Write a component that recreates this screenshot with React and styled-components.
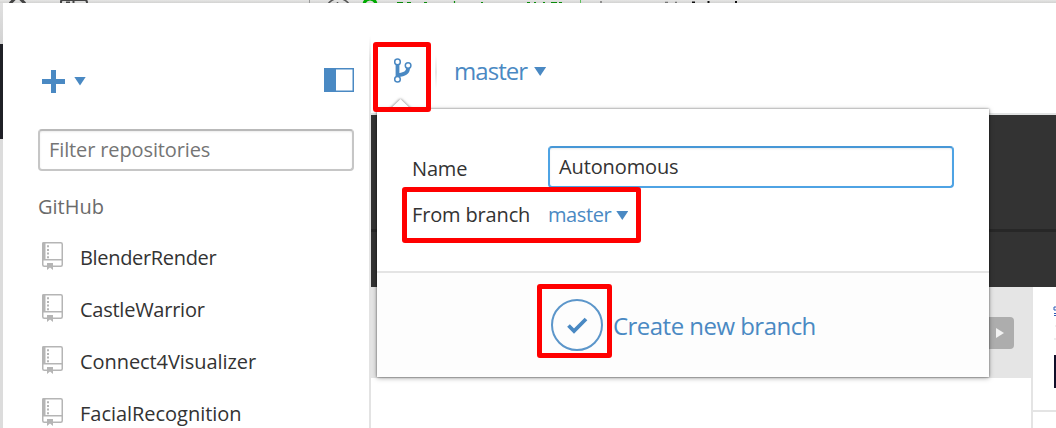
import React from "react";
import styled, { createGlobalStyle } from "styled-components";

const BLUE = "#4a89c3";

const GlobalStyle = createGlobalStyle`
  * { box-sizing: border-box; }
  body { margin: 0; background: #fff; overflow: hidden; }
`;

const Screen = styled.div`
  position: relative;
  width: 1056px;
  height: 428px;
  overflow: hidden;
  display: flex;
  flex-direction: column;
  font-family: "Open Sans", "Noto Sans", sans-serif;
  font-size: 20px;
  color: #333;
`;

const BrowserStrip = styled.div`
  height: 3px;
  flex: none;
  background: linear-gradient(#e6e6e5, #d2d2d1);
  svg { display: block; }
`;

const Desktop = styled.div`
  flex: 1;
  min-height: 0;
  display: flex;
`;

const DesktopEdge = styled.div`
  width: 3px;
  flex: none;
  background: linear-gradient(#e0e0e0, #d2d2d2 41px, #1f2026 41px, #1f2026 136px, #dcdcdc 136px);
`;

const Sidebar = styled.aside`
  width: 366px;
  flex: none;
  padding: 65px 15px 0 35px;
  display: flex;
  flex-direction: column;
`;

const SidebarTools = styled.div`
  height: 24px;
  flex: none;
  padding-left: 4px;
  display: flex;
  align-items: center;
  justify-content: space-between;
`;

const AddButton = styled.div`
  display: flex;
  align-items: center;
  gap: 9px;
  padding-top: 2px;
`;

const Caret = styled.span`
  width: 12px;
  height: 9px;
  flex: none;
  margin-top: ${(p) => p.$drop || 0}px;
  background: ${BLUE};
  clip-path: polygon(0 0, 100% 0, 50% 100%);
`;

const Field = styled.div`
  height: 42px;
  flex: none;
  border: 2px solid ${(p) => (p.$active ? "#4ea3e4" : "#c6c6c6")};
  border-top-color: ${(p) => (p.$active ? "#4797d6" : "#b9b9b9")};
  border-radius: 4px;
  padding-left: 9px;
  line-height: 38px;
  background: #fff;
  box-shadow: inset 0 1px 2px rgba(0, 0, 0, 0.08);
`;

const FilterField = styled(Field)`
  margin-top: 37px;
  color: #757575;
  letter-spacing: -0.12px;
`;

const GroupTitle = styled.h2`
  margin: 22px 0 10px;
  font-size: 20px;
  font-weight: 400;
  line-height: 28px;
  color: #6b6b6b;
`;

const RepoRow = styled.div`
  height: 52px;
  flex: none;
  display: flex;
  align-items: center;
  padding-left: 4px;
  gap: 17px;
  letter-spacing: ${(p) => p.$tracking}px;
  svg { margin-bottom: 2px; }
`;

const Main = styled.main`
  flex: 1;
  display: flex;
  flex-direction: column;
  border-left: 2px solid;
  border-image: linear-gradient(transparent 34px, #e3e3e3 58px) 1;
`;

const BranchBar = styled.header`
  height: 112px;
  flex: none;
  border-bottom: 2px solid #e2e4e4;
  padding: 52px 0 0 23px;
  display: flex;
  align-items: flex-start;
`;

const BranchIconSlot = styled.div`
  width: 20px;
  height: 28px;
  padding-top: 2px;
`;

const BarDivider = styled.div`
  width: 2px;
  height: 34px;
  margin: 0 17px 0 21px;
  background: linear-gradient(#fff, #e6e6e6 50%, #fff);
`;

const BranchName = styled.div`
  display: flex;
  align-items: center;
  gap: 7px;
  height: 31px;
  line-height: 31px;
  font-size: 24px;
  letter-spacing: -0.95px;
  color: ${BLUE};
`;

const CommitGraph = styled.section`
  height: 172px;
  flex: none;
  background: #333;
  padding-top: 114px;
`;

const GraphLine = styled.div`
  height: 3px;
  background: #272727;
`;

const Lower = styled.div`
  flex: 1;
  display: flex;
`;

const CompareColumn = styled.div`
  width: 662px;
  flex: none;
  border-right: 2px solid #e4e4e4;
`;

const CompareStrip = styled.div`
  height: 91px;
  background: #e5e5e5;
  display: flex;
  justify-content: flex-end;
  padding: 30px 17px 0 0;
`;

const PlayButton = styled.div`
  width: 40px;
  height: 32px;
  border-radius: 4px;
  background: #adadad;
  display: flex;
  align-items: center;
  justify-content: flex-end;
  padding-right: 10px;
`;

const CommitColumn = styled.div`
  flex: 1;
`;

const CommitItem = styled.div`
  height: 125px;
  border-bottom: 2px solid #e4e4e4;
  display: flex;
  justify-content: flex-end;
  padding-top: 19px;
  svg { display: block; }
`;

const Popover = styled.div`
  position: absolute;
  left: 377px;
  top: 109px;
  width: 612px;
  height: 268px;
  background: #fff;
  box-shadow: 0 0 2px rgba(0, 0, 0, 0.45), 0 1px 5px rgba(0, 0, 0, 0.35);
  display: flex;
  flex-direction: column;
`;

const PopoverTip = styled.svg`
  position: absolute;
  left: 388px;
  top: 96px;
  path { filter: drop-shadow(0 0 1.5px rgba(0, 0, 0, 0.6)); }
`;

const Form = styled.div`
  height: 162px;
  flex: none;
  padding: 37px 35px 0;
  display: grid;
  grid-template-columns: 136px 1fr;
  grid-template-rows: 42px 50px;
`;

const Label = styled.label`
  line-height: ${(p) => p.$line}px;
  letter-spacing: -0.15px;
`;

const NameField = styled(Field)`
  letter-spacing: -0.12px;
`;

const BaseBranch = styled.div`
  display: flex;
  align-items: center;
  gap: 5px;
  height: 53px;
  color: ${BLUE};
  letter-spacing: -0.4px;
`;

const PopoverFooter = styled.div`
  flex: 1;
  border-top: 2px solid #e4e4e4;
  background: #fdfdfd;
  display: flex;
  align-items: center;
  padding: 0 0 0 174px;
  gap: 10px;
  font-size: 24px;
  letter-spacing: -0.53px;
  color: ${BLUE};
`;

const Confirm = styled.span`
  width: 52px;
  height: 52px;
  border: 2px solid #5c96ca;
  border-radius: 50%;
  display: flex;
  align-items: center;
  justify-content: center;
`;

const Highlight = styled.div`
  position: absolute;
  left: ${(p) => p.$x}px;
  top: ${(p) => p.$y}px;
  width: ${(p) => p.$w}px;
  height: ${(p) => p.$h}px;
  border: 5px solid #f00;
  border-radius: 3px;
`;

const StripFragments = () => (
  <svg width="1056" height="3" fill="none">
    <path d="M10 3.5 17.500 -4 25 3.500" stroke="#444" strokeWidth="3" />
    <path d="M61 3V1.500Q61 0 63 0H85Q87 0 87 3M73.500 0V3M66 2.500h4" stroke="#444" strokeWidth="2" />
    <path d="M309.500 0V3" stroke="#999" />
    <path d="M328 4Q331 0 335 -1M342 -1Q346 0 349 4M337.500 2v1" stroke="#555" strokeWidth="1.500" />
    <path d="M364 4Q365 -1 370 -1T376 4" stroke="#0a0" strokeWidth="3" />
    <path d="M397 2.500h6M407 2.500h4M424 2.500h3M454.500 1v2M481 2.500h2M527 2.500h3M534 2.500h2M543 2.500h2M551 2.500h6M559 2.500h3" stroke="#0a8a0a" strokeWidth="1.200" />
    <path d="M580.500 0V3" stroke="#5cc05c" />
    <path d="M601 1v2M665 2.500h3M675 2.500h2" stroke="#777" strokeWidth="1.500" />
    <path d="M692 2.500h3M707.500 2h2M735 2h2" stroke="#111" strokeWidth="1.800" />
  </svg>
);

const PlusIcon = () => (
  <svg width="23" height="23" viewBox="0 0 23 23" fill={BLUE}>
    <path d="M9 0h5v9h9v5h-9v9H9v-9H0V9h9z" />
  </svg>
);

const PanelIcon = () => (
  <svg width="30" height="24" viewBox="0 0 30 24">
    <path d="M.75.75h28.500v22.500H.75z" fill="#fff" stroke={BLUE} strokeWidth="1.500" />
    <path d="M0 0h12v24H0z" fill={BLUE} />
  </svg>
);

const RepoIcon = () => (
  <svg width="21" height="28" viewBox="0 0 21 28" fill="none">
    <path d="M1.500 0H3.500V18H0V1.500Q0 0 1.500 0z" fill="#b5b5b5" />
    <rect x=".75" y=".75" width="19.500" height="23.500" rx="1.500" stroke="#b5b5b5" strokeWidth="1.500" />
    <path d="M1 17.750h19" stroke="#b5b5b5" strokeWidth="1.500" />
    <path d="M6 3.200v13" stroke="#b5b5b5" strokeWidth="2" strokeDasharray="2 1.700" />
    <path d="M5 21h6v7l-3-2.500L5 28z" fill="#b5b5b5" />
  </svg>
);

const BranchIcon = () => (
  <svg width="20" height="26" viewBox="0 0 20 26" fill="none">
    <path d="M3.500 7V20M14.100 11C14.100 16 10.500 17.300 3.500 18.500" stroke={BLUE} strokeWidth="3.800" />
    <g fill="#fff" stroke={BLUE} strokeWidth="1.500">
      <circle cx="3.500" cy="4.900" r="2.800" />
      <circle cx="14.100" cy="8.500" r="2.800" />
      <circle cx="3.500" cy="22.300" r="2.800" />
    </g>
  </svg>
);

const CheckIcon = () => (
  <svg width="22" height="18" viewBox="0 0 22 18" fill="none">
    <path d="M2.500 9.500 8 15 20 3" stroke={BLUE} strokeWidth="3.800" />
  </svg>
);

const PlayIcon = () => (
  <svg width="8" height="10" viewBox="0 0 8 10">
    <path d="M0 0 8 5 0 10z" fill="#f2f2f2" />
  </svg>
);

const CommitFragment = () => (
  <svg width="3" height="84" viewBox="0 0 3 84">
    <path d="M3 1H1v3h2M1 7.500h2M1 9.500h2" stroke="#2d5bb5" fill="none" />
    <path d="M2 20h1M1 33h2" stroke="#ddd" />
    <path d="M1 49h2v33H1z" fill="#10102a" />
  </svg>
);

const repositories = [
  { name: "BlenderRender", tracking: -0.33 },
  { name: "CastleWarrior", tracking: -0.25 },
  { name: "Connect4Visualizer", tracking: -0.07 },
  { name: "FacialRecognition", tracking: -0.03 },
];

export default function App() {
  return (
    <Screen>
      <GlobalStyle />
      <BrowserStrip>
        <StripFragments />
      </BrowserStrip>
      <Desktop>
        <DesktopEdge />
        <Sidebar>
          <SidebarTools>
            <AddButton>
              <PlusIcon />
              <Caret />
            </AddButton>
            <PanelIcon />
          </SidebarTools>
          <FilterField>Filter repositories</FilterField>
          <GroupTitle>GitHub</GroupTitle>
          {repositories.map((repo) => (
            <RepoRow key={repo.name} $tracking={repo.tracking}>
              <RepoIcon />
              {repo.name}
            </RepoRow>
          ))}
        </Sidebar>
        <Main>
          <BranchBar>
            <BranchIconSlot>
              <BranchIcon />
            </BranchIconSlot>
            <BarDivider />
            <BranchName>
              master
              <Caret $drop={2} />
            </BranchName>
          </BranchBar>
          <CommitGraph>
            <GraphLine />
          </CommitGraph>
          <Lower>
            <CompareColumn>
              <CompareStrip>
                <PlayButton>
                  <PlayIcon />
                </PlayButton>
              </CompareStrip>
            </CompareColumn>
            <CommitColumn>
              <CommitItem>
                <CommitFragment />
              </CommitItem>
            </CommitColumn>
          </Lower>
        </Main>
      </Desktop>

      <Popover>
        <Form>
          <Label $line={46}>Name</Label>
          <NameField $active>Autonomous</NameField>
          <Label $line={54}>From branch</Label>
          <BaseBranch>
            master
            <Caret $drop={2} />
          </BaseBranch>
        </Form>
        <PopoverFooter>
          <Confirm>
            <CheckIcon />
          </Confirm>
          Create new branch
        </PopoverFooter>
      </Popover>
      <PopoverTip width="25" height="15" viewBox="0 0 25 15">
        <path d="M0 15 12.500 3 25 15z" fill="#fff" />
      </PopoverTip>

      <Highlight $x={373} $y={42} $w={58} $h={70} />
      <Highlight $x={402} $y={187} $w={239} $h={56} />
      <Highlight $x={537} $y={284} $w={75} $h={74} />
    </Screen>
  );
}
